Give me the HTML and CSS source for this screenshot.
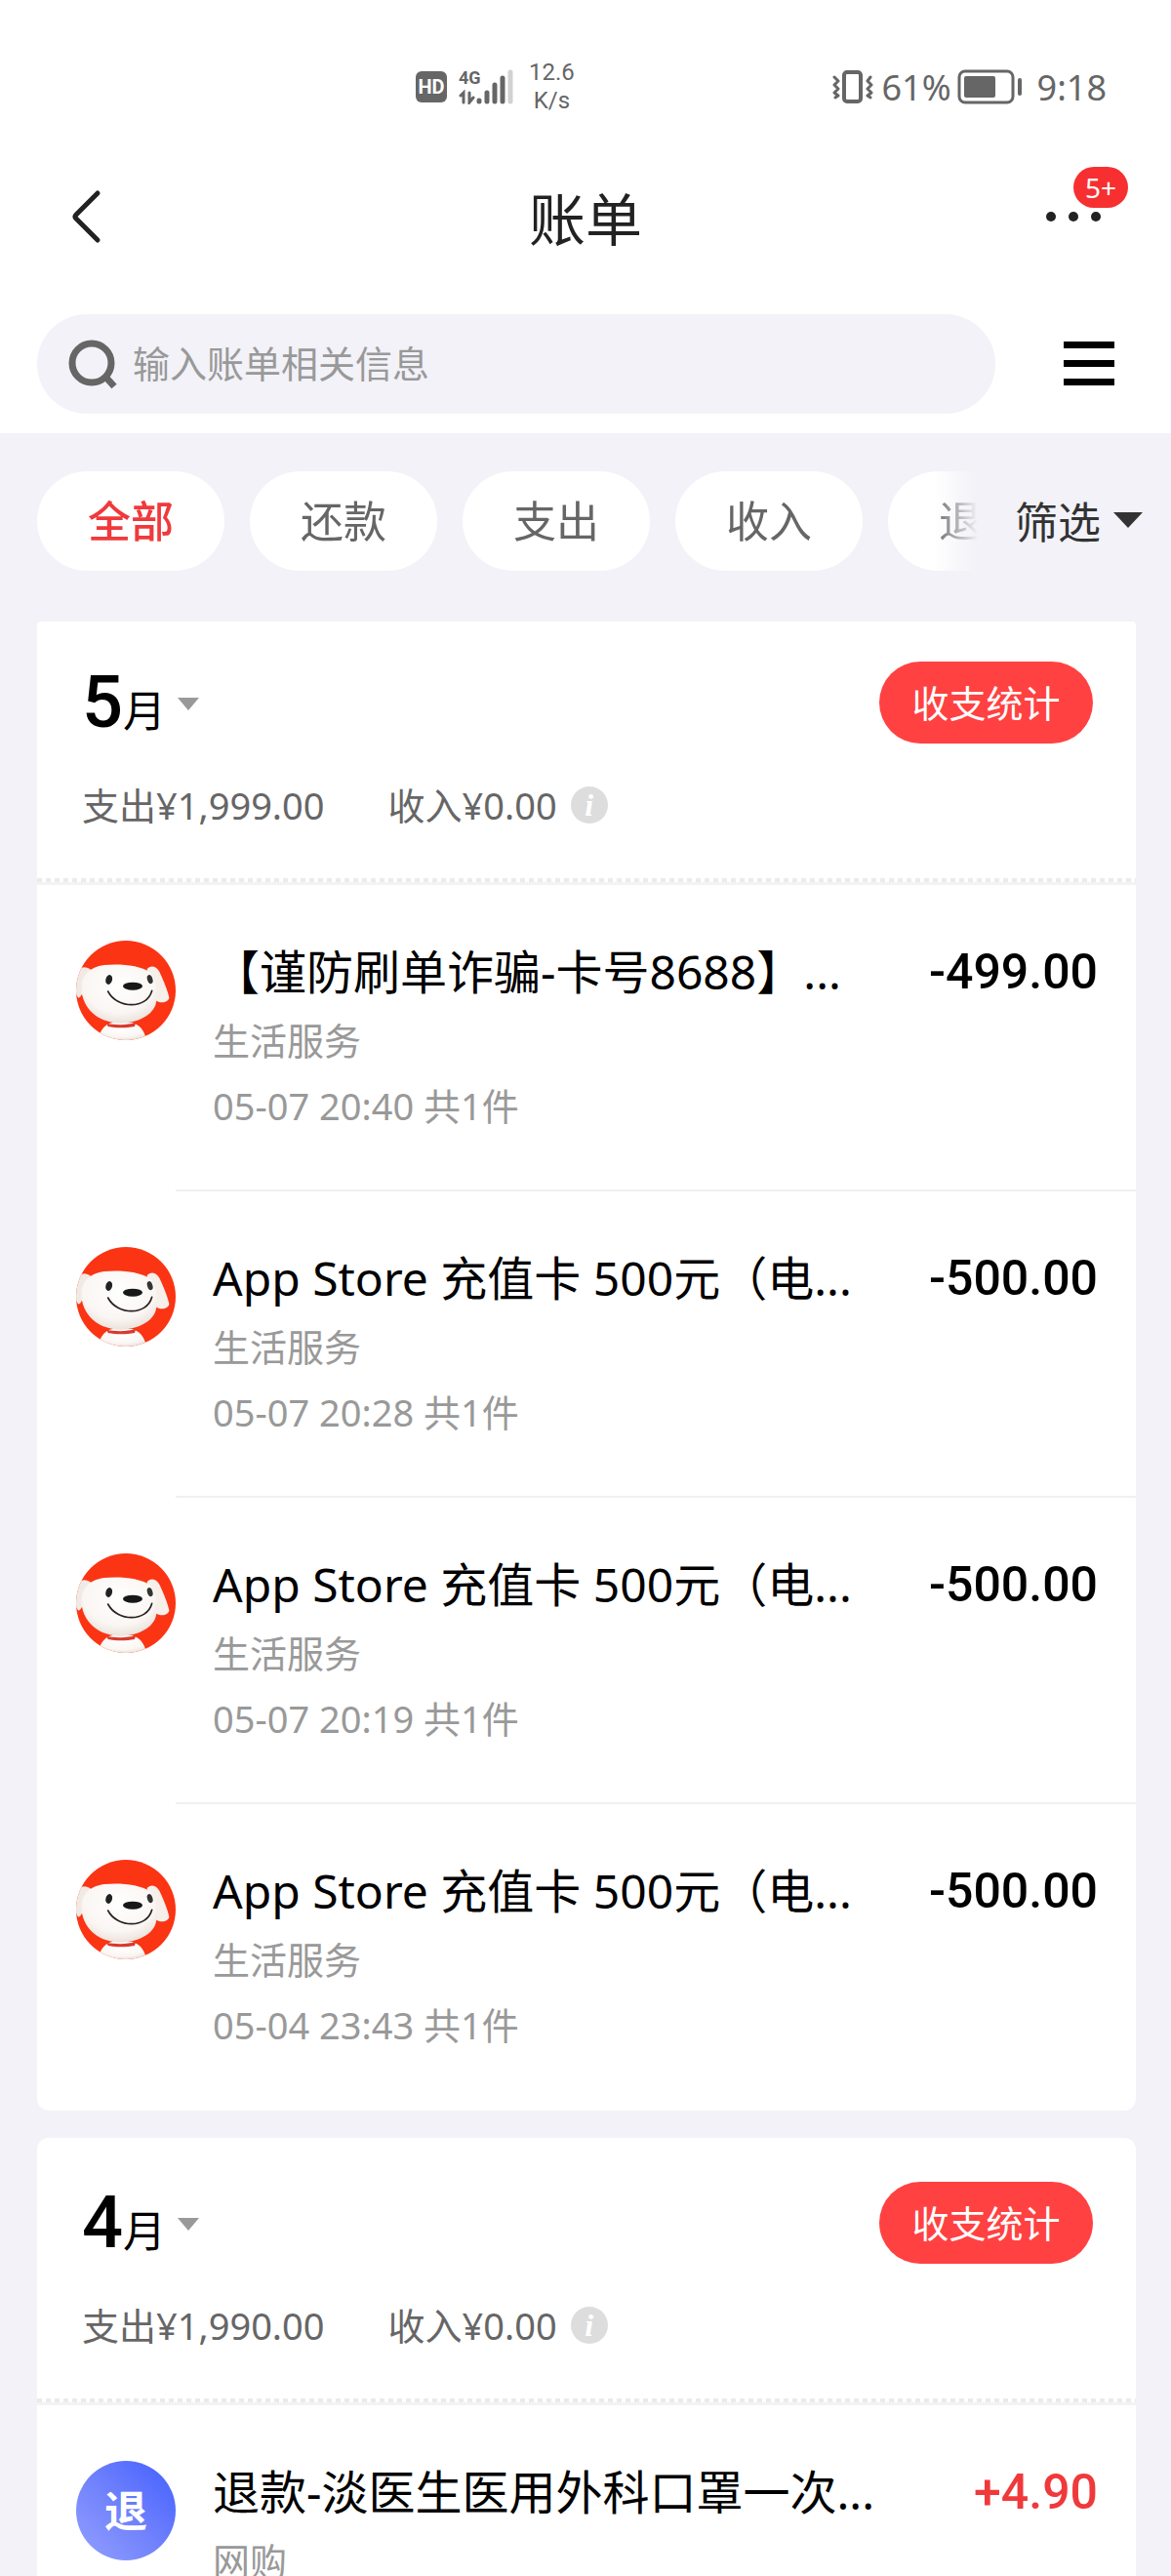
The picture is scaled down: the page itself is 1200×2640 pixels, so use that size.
FILE: index.html
```html
<!DOCTYPE html>
<html lang="zh-CN">
<head>
<meta charset="utf-8">
<meta name="viewport" content="width=device-width, initial-scale=1">
<title>账单</title>
<link rel="stylesheet" href="styles.css">
</head>
<body>
<svg class="sprite" aria-hidden="true">
  <defs>
    <radialGradient id="fur" cx="50%" cy="35%" r="72%">
      <stop offset="0" stop-color="#fff"/>
      <stop offset="0.65" stop-color="#faf6f3"/>
      <stop offset="1" stop-color="#e6dad3"/>
    </radialGradient>
    <clipPath id="disc"><circle cx="207" cy="223" r="153"/></clipPath>
  </defs>
  <symbol id="joy" viewBox="54 70 306 306">
    <g clip-path="url(#disc)">
      <rect x="54" y="70" width="306" height="306" fill="#fb3413"/>
      <path d="M100 160C82 145 60 150 52 175C44 205 48 235 62 246C76 240 84 200 100 160Z" fill="#f1e9e4"/>
      <path d="M122 376C126 345 145 325 165 322H225C248 328 264 345 270 376Z" fill="url(#fur)"/>
      <path d="M272 158C282 144 300 148 310 165C322 190 336 225 340 245C338 262 312 264 298 254Z" fill="#f7efea"/>
      <path d="M70 222C66 180 92 152 140 145C190 140 250 146 280 166C304 190 308 235 298 268C284 304 240 322 190 324C130 322 78 290 70 222Z" fill="url(#fur)"/>
      <path d="M148 324C172 330 210 330 237 323L234 334C208 339 176 339 152 334Z" fill="#d83a2e"/>
      <ellipse cx="155" cy="190" rx="10" ry="15" transform="rotate(15 155 190)" fill="#222"/>
      <ellipse cx="281" cy="189" rx="8" ry="14" transform="rotate(-18 281 189)" fill="#333"/>
      <ellipse cx="228" cy="210" rx="30" ry="12" fill="#181818"/>
      <path d="M152 226C180 280 272 282 287 224" fill="none" stroke="#2a2220" stroke-width="5" stroke-linecap="round"/>
    </g>
  </symbol>
</svg>

<header class="header">
  <div class="status">
    <div class="status-group">
      <span class="hd">HD</span>
      <span class="network">
        <span class="network-type">4G</span>
        <svg width="56" height="36" viewBox="0 0 56 36" fill="none" stroke="#666" stroke-width="5" stroke-linecap="round" aria-hidden="true">
          <path d="M2 27L5 24V34M11 24V34L15 29" stroke-width="3"/>
          <path d="M21 32V33M29 24V33M37 16V33M45 9V33"/>
          <path d="M53 3V33" stroke="#d2d2d2"/>
        </svg>
      </span>
      <span class="speed">12.6<br>K/s</span>
    </div>
    <div class="status-group">
      <svg width="42" height="36" viewBox="0 0 42 36" fill="none" stroke="#666" stroke-linejoin="round" stroke-linecap="round" aria-hidden="true">
        <rect x="12" y="3" width="17" height="30" rx="3" stroke-width="4"/>
        <path d="M2 8L6 12L2 16L6 20L2 24L6 27L3 29M39 8L36 12L40 16L36 20L40 24L36 27L39 29" stroke-width="3"/>
      </svg>
      <span class="status-text">61%</span>
      <svg class="battery" width="68" height="36" viewBox="0 0 68 36" aria-hidden="true">
        <rect x="2" y="2" width="55" height="32" rx="6" fill="none" stroke="#666" stroke-width="3"/>
        <rect x="7" y="7" width="32" height="22" rx="2" fill="#666"/>
        <rect x="62" y="9" width="4" height="18" rx="2" fill="#666"/>
      </svg>
      <span class="status-text clock">9:18</span>
    </div>
  </div>

  <div class="titlebar">
    <button class="icon-button back" type="button" aria-label="返回">
      <svg width="32" height="56" viewBox="0 0 32 56" fill="none" stroke="#222" stroke-width="5" stroke-linecap="round" stroke-linejoin="round"><path d="M28 4L6 26Q4 28 6 30L28 52"/></svg>
    </button>
    <h1 class="title">账单</h1>
    <button class="icon-button more" type="button" aria-label="更多">
      <svg width="56" height="10" viewBox="0 0 56 10" fill="#222"><circle cx="5" cy="5" r="5"/><circle cx="28" cy="5" r="5"/><circle cx="51" cy="5" r="5"/></svg>
      <span class="badge">5+</span>
    </button>
  </div>

  <div class="search-row">
    <label class="search">
      <svg width="52" height="52" viewBox="0 0 52 52" fill="none" stroke="#666" aria-hidden="true"><circle cx="24" cy="25" r="20" stroke-width="7"/><path d="M38 39L47 49" stroke-width="7"/></svg>
      <input class="search-input" type="text" placeholder="输入账单相关信息" aria-label="搜索账单">
    </label>
    <button class="icon-button" type="button" aria-label="菜单">
      <svg width="52" height="46" viewBox="0 0 52 46"><path d="M0 0H52V7H0ZM0 19H52V26H0ZM0 38H52V45H0Z"/></svg>
    </button>
  </div>
</header>

<main class="content">
  <div class="filters">
    <div class="tabs">
      <button class="tab tab-active" type="button">全部</button>
      <button class="tab" type="button">还款</button>
      <button class="tab" type="button">支出</button>
      <button class="tab" type="button">收入</button>
      <button class="tab" type="button">退款</button>
    </div>
    <button class="filter-button" type="button">筛选<span class="caret caret-dark"></span></button>
  </div>

  <section class="card card-first">
    <div class="card-head">
      <div class="month-row">
        <button class="month" type="button"><span class="month-number">5</span>月<span class="caret"></span></button>
        <button class="stats" type="button">收支统计</button>
      </div>
      <div class="summary">
        <span>支出¥1,999.00</span>
        <span class="income">收入¥0.00<span class="info">i</span></span>
      </div>
    </div>
    <ul class="list">
      <li class="row">
        <svg class="avatar" aria-hidden="true"><use href="#joy"/></svg>
        <div class="row-body">
          <div class="row-main"><span class="name">【谨防刷单诈骗-卡号8688】...</span><span class="amount">-499.00</span></div>
          <div class="meta">生活服务</div>
          <div class="meta">05-07 20:40 共1件</div>
        </div>
      </li>
      <li class="row">
        <svg class="avatar" aria-hidden="true"><use href="#joy"/></svg>
        <div class="row-body">
          <div class="row-main"><span class="name">App Store 充值卡 500元（电...</span><span class="amount">-500.00</span></div>
          <div class="meta">生活服务</div>
          <div class="meta">05-07 20:28 共1件</div>
        </div>
      </li>
      <li class="row">
        <svg class="avatar" aria-hidden="true"><use href="#joy"/></svg>
        <div class="row-body">
          <div class="row-main"><span class="name">App Store 充值卡 500元（电...</span><span class="amount">-500.00</span></div>
          <div class="meta">生活服务</div>
          <div class="meta">05-07 20:19 共1件</div>
        </div>
      </li>
      <li class="row">
        <svg class="avatar" aria-hidden="true"><use href="#joy"/></svg>
        <div class="row-body">
          <div class="row-main"><span class="name">App Store 充值卡 500元（电...</span><span class="amount">-500.00</span></div>
          <div class="meta">生活服务</div>
          <div class="meta">05-04 23:43 共1件</div>
        </div>
      </li>
    </ul>
  </section>

  <section class="card">
    <div class="card-head">
      <div class="month-row">
        <button class="month" type="button"><span class="month-number">4</span>月<span class="caret"></span></button>
        <button class="stats" type="button">收支统计</button>
      </div>
      <div class="summary">
        <span>支出¥1,990.00</span>
        <span class="income">收入¥0.00<span class="info">i</span></span>
      </div>
    </div>
    <ul class="list">
      <li class="row">
        <span class="avatar avatar-refund">退</span>
        <div class="row-body">
          <div class="row-main"><span class="name">退款-淡医生医用外科口罩一次...</span><span class="amount amount-in">+4.90</span></div>
          <div class="meta">网购</div>
        </div>
      </li>
    </ul>
  </section>
</main>
</body>
</html>
```
FILE: styles.css
```css
*,
*::before,
*::after {
  box-sizing: border-box;
}

body {
  margin: 0;
  height: 100vh;
  overflow: hidden;
  display: flex;
  flex-direction: column;
  background: #f2f2f8;
  color: #000;
  font-family: "Noto Sans", "Noto Sans CJK SC", sans-serif;
}

button {
  margin: 0;
  padding: 0;
  border: 0;
  background: none;
  color: inherit;
  font: inherit;
}

svg {
  display: block;
  flex: none;
}

.sprite {
  position: absolute;
  width: 0;
  height: 0;
}

/* Header */

.header {
  flex: none;
  padding-bottom: 20px;
  background: #fff;
}

.status {
  display: flex;
  justify-content: space-between;
  height: 178px;
  padding: 0 66px 0 426px;
  color: #666;
}

.status-group {
  display: flex;
  align-items: center;
}

.hd {
  width: 32px;
  height: 32px;
  border-radius: 6px;
  background: #666;
  color: #fff;
  font: 700 20px/32px Roboto, sans-serif;
  text-align: center;
}

.network {
  position: relative;
  margin-left: 12px;
}

.network-type {
  position: absolute;
  left: 0;
  top: 0;
  font: 700 18px/18px Roboto, sans-serif;
}

.speed {
  margin-left: 16px;
  font: 24px/29px Roboto, sans-serif;
  text-align: center;
}

.status-text {
  margin-left: 8px;
  font-size: 36px;
}

.battery {
  margin-left: 6px;
}

.clock {
  margin-left: 14px;
}

.titlebar {
  display: grid;
  grid-template-columns: 1fr auto 1fr;
  align-items: center;
  height: 88px;
  padding: 0 72px;
}

.icon-button {
  flex: none;
}

.back {
  justify-self: start;
}

.title {
  margin: 0;
  color: #222;
  font-size: 58px;
  font-weight: 400;
}

.more {
  position: relative;
  justify-self: end;
}

.badge {
  position: absolute;
  left: 28px;
  bottom: 14px;
  width: 56px;
  height: 42px;
  border-radius: 21px;
  background: #f72f30;
  color: #fff;
  font-size: 28px;
  line-height: 42px;
  text-align: center;
}

.search-row {
  display: flex;
  align-items: center;
  gap: 70px;
  margin-top: 56px;
  padding: 0 58px 0 38px;
}

.search {
  flex: 1;
  display: flex;
  align-items: center;
  gap: 14px;
  height: 102px;
  padding: 0 32px;
  border-radius: 51px;
  background: #f2f2f8;
}

.search-input {
  flex: 1;
  min-width: 0;
  padding: 0 0 2px;
  border: 0;
  outline: 0;
  background: none;
  font: inherit;
  font-size: 38px;
}

.search-input::placeholder {
  color: #999;
  opacity: 1;
}

/* Filter tabs */

.content {
  flex: 1;
  min-height: 0;
  overflow: hidden;
}

.filters {
  display: flex;
  align-items: center;
  gap: 38px;
  padding: 39px 29px 52px 38px;
}

.tabs {
  flex: 1;
  display: flex;
  gap: 26px;
  overflow: hidden;
  -webkit-mask-image: linear-gradient(to left, transparent, #000 46px);
  mask-image: linear-gradient(to left, transparent, #000 46px);
}

.tab {
  flex: none;
  width: 192px;
  height: 102px;
  padding-bottom: 4px;
  border-radius: 51px;
  background: #fff;
  color: #666;
  font-size: 44px;
}

.tab-active {
  color: #f0393b;
  font-weight: 500;
}

.filter-button {
  flex: none;
  display: flex;
  align-items: center;
  gap: 13px;
  padding-bottom: 2px;
  color: #333;
  font-size: 44px;
}

.caret {
  border: 11px solid transparent;
  border-top: 13px solid #999;
  border-bottom: 0;
}

.caret-dark {
  border-width: 16px 15px 0;
  border-top-color: #333;
}

/* Monthly cards */

.card {
  margin: 0 36px 28px 38px;
  border-radius: 12px;
  background: #fff;
}

.card-first {
  border-radius: 4px 4px 12px 12px;
}

.card-head {
  padding: 45px 44px 50px 46px;
}

.card-first .card-head {
  padding-top: 41px;
}

.month-row {
  display: flex;
  align-items: center;
  justify-content: space-between;
  height: 84px;
}

.month {
  display: flex;
  align-items: baseline;
  padding-top: 8px;
  font-size: 44px;
  line-height: 84px;
}

.month-number {
  font-family: Roboto, sans-serif;
  font-size: 74px;
  font-weight: 500;
}

.month .caret {
  align-self: center;
  margin: 0 0 6px 12px;
}

.stats {
  width: 219px;
  height: 84px;
  padding-bottom: 4px;
  border-radius: 42px;
  background: #ff4142;
  color: #fff;
  font-size: 38px;
}

.summary {
  display: flex;
  gap: 65px;
  margin-top: 38px;
  color: #666;
  font-size: 38px;
  line-height: 50px;
}

.income {
  display: flex;
  align-items: center;
  gap: 14px;
}

.info {
  width: 38px;
  height: 38px;
  border-radius: 50%;
  background: #ddd;
  color: #fff;
  font: italic 700 32px/38px "Liberation Serif", serif;
  text-align: center;
}

.list {
  margin: 0;
  padding: 0;
  list-style: none;
}

.list::before {
  content: "";
  display: block;
  height: 7px;
  border-bottom: 3px solid #f3f3f3;
  background: repeating-linear-gradient(to right, #ebebeb 0 5px, #fff 5px 9px);
}

.row {
  display: flex;
  height: 314px;
}

.avatar {
  flex: none;
  width: 102px;
  height: 102px;
  margin: 57px 0 0 40px;
}

.avatar-refund {
  border-radius: 50%;
  background: linear-gradient(45deg, #93a0ff, #7384fc 45%, #4b66ff 90%);
  color: #fff;
  font-size: 44px;
  font-weight: 700;
  line-height: 102px;
  text-align: center;
}

.row-body {
  flex: 1;
  min-width: 0;
  padding: 57px 39px 0 38px;
  border-bottom: 2px solid #f0f0f0;
}

.row:last-child .row-body {
  border-bottom: 0;
}

.row-main {
  display: flex;
  justify-content: space-between;
  margin-bottom: 5px;
  line-height: 64px;
  white-space: nowrap;
}

.name {
  overflow: hidden;
  font-size: 48px;
}

.amount {
  font-family: Roboto, sans-serif;
  font-size: 50px;
  font-weight: 500;
}

.amount-in {
  color: #f0393b;
}

.meta {
  color: #999;
  font-size: 38px;
  line-height: 67px;
}
```
